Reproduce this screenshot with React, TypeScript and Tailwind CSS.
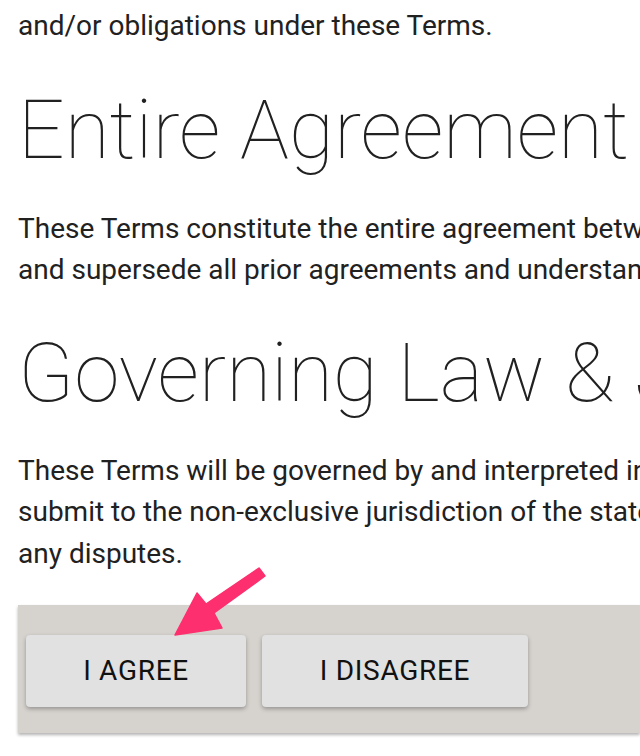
import React from "react";

export default function App() {
  return (
    <div className="relative w-[640px] h-[756px] overflow-hidden bg-white text-[#212121]" style={{ fontFamily: "Roboto, 'Liberation Sans', sans-serif" }}>
      <div className="pl-[18px] whitespace-nowrap">
        <p className="mt-[5px] text-[28px] leading-[41.5px]">and/or obligations under these Terms.</p>
        <h1 className="mt-[33px] text-[82px] leading-[100px] font-thin">Entire Agreement</h1>
        <p className="mt-[28px] text-[28px] leading-[41.5px]">
          These Terms constitute the entire agreement between you and us in relation to your use of our website,
          <br />
          and supersede all prior agreements and understandings.
        </p>
        <h1 className="mt-[32px] text-[82px] leading-[100px] font-thin">Governing Law &amp; Jurisdiction</h1>
        <p className="mt-[27px] text-[28px] leading-[41.5px]">
          These Terms will be governed by and interpreted in accordance with the laws of the state,
          <br />
          submit to the non-exclusive jurisdiction of the state and federal courts for the resolution of
          <br />
          any disputes.
        </p>
      </div>
      <div className="ml-[18px] mt-[31px] h-[128px] bg-[#d6d3cf] shadow-[0_2px_3px_rgba(0,0,0,0.3)] pl-[8px] pt-[30px] flex gap-[16px]">
        <button className="w-[220px] h-[72px] rounded-[4px] bg-[#e1e1e1] shadow-[0_2px_4px_rgba(0,0,0,0.3)] text-[28px] tracking-[0.7px] text-[#111]">
          I AGREE
        </button>
        <button className="w-[266px] h-[72px] rounded-[4px] bg-[#e1e1e1] shadow-[0_2px_4px_rgba(0,0,0,0.3)] text-[28px] tracking-[0.7px] text-[#111]">
          I DISAGREE
        </button>
      </div>
      <svg className="absolute left-0 top-0 pointer-events-none" width="640" height="756" viewBox="0 0 640 756">
        <polygon
          points="175,635 197,593 206,604 259,568 265,576 214,613 222,628"
          fill="#fd2f6e"
          stroke="#fd2f6e"
          strokeWidth="1.5"
          strokeLinejoin="round"
        />
      </svg>
    </div>
  );
}
